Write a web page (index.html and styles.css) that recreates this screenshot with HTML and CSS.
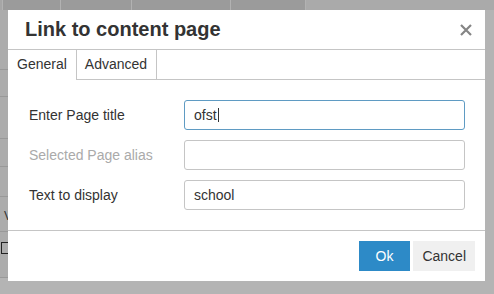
FILE: index.html
```html
<!DOCTYPE html>
<html lang="en">
  <head>
    <meta charset="UTF-8" />
    <meta name="viewport" content="width=device-width, initial-scale=1.0" />
    <title>Link to content page</title>
    <link rel="stylesheet" href="styles.css">
  </head>

  <body>
    <!-- page behind the modal (greyed out) -->
    <div class="page">
      <div class="toolbar">
        <span class="cell c0"></span>
        <span class="cell c1"></span>
        <span class="cell c2"></span>
        <span class="cell c3"></span>
        <span class="cell c4"></span>
        <span class="cell rest"></span>
      </div>
      <div class="grid-behind">
        <div class="row r1"></div>
        <div class="row r2"></div>
        <div class="row r3"></div>
        <div class="row r4"></div>
        <div class="row r5"></div>
        <div class="row r6"><span class="peek">V</span></div>
        <div class="row r7"><span class="peek-icon"></span></div>
      </div>
    </div>

    <div class="dialog">
      <div class="dialog-head">
        <h1>Link to content page</h1>
        <button class="close" type="button" aria-label="Close">
          <svg width="12" height="12" viewBox="0 0 12 12">
            <path d="M1 1 L11 11 M11 1 L1 11" stroke="#858585" stroke-width="2.2" fill="none" />
          </svg>
        </button>
      </div>

      <div class="tabs">
        <div class="tab active">General</div>
        <div class="tab">Advanced</div>
      </div>

      <div class="dialog-body">
        <label class="lbl">Enter Page title</label>
        <div class="field focus"><span>ofst</span><span class="caret"></span></div>

        <label class="lbl disabled">Selected Page alias</label>
        <div class="field"></div>

        <label class="lbl">Text to display</label>
        <div class="field"><span>school</span></div>
      </div>

      <div class="dialog-foot">
        <button class="btn primary" type="button">Ok</button>
        <button class="btn" type="button">Cancel</button>
      </div>
    </div>
  </body>
</html>
```

FILE: styles.css
```css
body {
  font-family: "Liberation Sans", Arial, sans-serif;
  margin: 0;
  padding: 0;
  background-color: #b4b4b4;
  color: #333;
  width: 494px;
  height: 294px;
  overflow: hidden;
  position: relative;
}

/* background page */

.toolbar {
  display: flex;
  height: 10px;
  background-color: #9b9b9b;
}

.cell {
  height: 10px;
  border-right: 1px solid #b2b2b2;
}

.c0 { width: 2px; background-color: #a6a6a6; }
.c1 { width: 57px; }
.c2 { width: 70px; }
.c3 { width: 98px; }
.c4 { width: 74px; }

.cell.rest {
  flex: 1;
  border-right: none;
  background-color: #aaaaaa;
}

.grid-behind {
  width: 8px;
  background-color: #acacac;
}

.row {
  border-bottom: 1px solid #999;
  position: relative;
}

.r1 { height: 59px; }
.r2 { height: 26px; }
.r3 { height: 41px; }
.r4 { height: 27px; }
.r5 { height: 29px; }
.r6 { height: 34px; }
.r7 { height: 35px; }

.peek {
  font-size: 12px;
  color: #333;
  display: block;
  padding: 12px 0 0 4px;
}

.peek-icon {
  display: block;
  margin: 10px 0 0 1px;
  width: 7px;
  height: 10px;
  border: 1px solid #222;
  border-right: none;
}

/* dialog */

.dialog {
  position: absolute;
  left: 8px;
  top: 10px;
  width: 477px;
  height: 271px;
  background-color: #fff;
  display: flex;
  flex-direction: column;
}

.dialog-head {
  display: flex;
  justify-content: space-between;
  align-items: center;
  height: 39px;
  border-bottom: 1px solid #c5c5c5;
  padding: 0 13px 0 17px;
}

.dialog-head h1 {
  margin: 0;
  font-size: 20px;
  font-weight: bold;
  line-height: 39px;
  color: #333;
}

.close {
  border: none;
  background: none;
  padding: 0;
  width: 12px;
  height: 12px;
  cursor: pointer;
  display: flex;
}

.tabs {
  display: flex;
  height: 29px;
  border-bottom: 1px solid #c5c5c5;
}

.tab {
  font-size: 14px;
  line-height: 29px;
  padding: 0 9px 0 8px;
  border-right: 1px solid #c5c5c5;
  color: #333;
}

.tab.active {
  padding-left: 9px;
  margin-bottom: -1px;
  height: 30px;
  background-color: #fff;
}

.dialog-body {
  display: grid;
  grid-template-columns: 155px 1fr;
  row-gap: 10px;
  align-items: center;
  padding: 20px 20px 20px 21px;
}

.lbl {
  font-size: 14px;
  color: #333;
}

.lbl.disabled {
  color: #aaa;
}

.field {
  height: 28px;
  border: 1px solid #c5c5c5;
  border-radius: 3px;
  padding: 0 9px;
  font-size: 14px;
  line-height: 28px;
  color: #333;
  display: flex;
  align-items: center;
}

.field.focus {
  border-color: #5f9bc3;
}

.caret {
  display: inline-block;
  width: 1px;
  height: 14px;
  margin-left: 1px;
  background-color: #333;
}

.dialog-foot {
  border-top: 1px solid #c5c5c5;
  height: 30px;
  padding: 10px;
  display: flex;
  justify-content: flex-end;
  gap: 3px;
}

.btn {
  font-family: "Liberation Sans", Arial, sans-serif;
  font-size: 14px;
  height: 30px;
  border: none;
  border-radius: 0;
  padding: 0 9px;
  background-color: #f0f0f0;
  color: #333;
  cursor: pointer;
}

.btn.primary {
  background-color: #2d8ac7;
  color: #fff;
  padding: 0 17px;
}
```
